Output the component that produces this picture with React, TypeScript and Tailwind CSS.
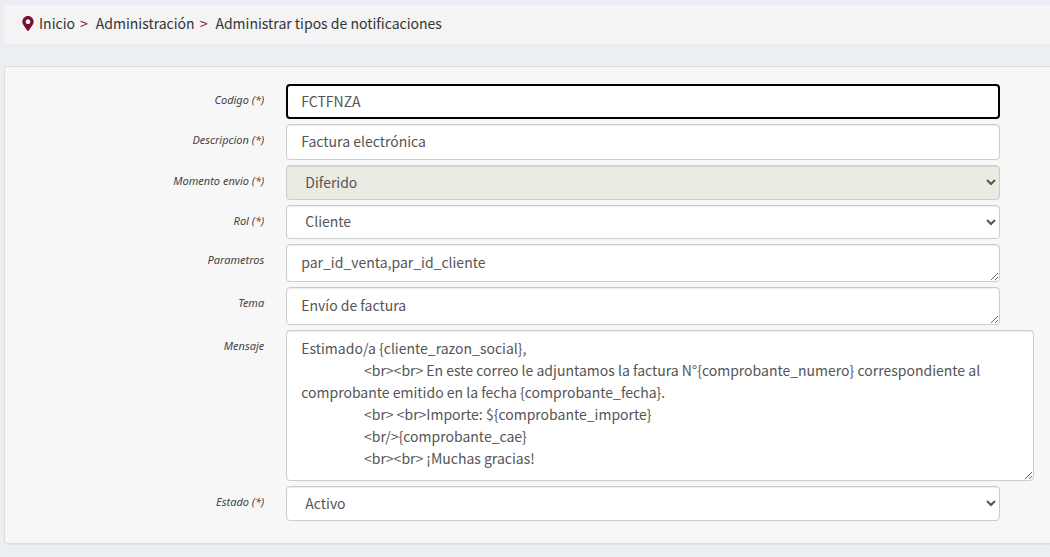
import type { ReactNode } from "react";
import { FaMapMarkerAlt } from "react-icons/fa";
import clsx from "clsx";

const control =
  "block w-full rounded border border-[#ccc] bg-white px-[14px] text-[14px] leading-[22px] text-[#555] shadow-[inset_0_1px_1px_rgba(0,0,0,0.075)] outline-none focus:border-2 focus:border-black focus:px-[13px] focus:shadow-none";

const MENSAJE = [
  "Estimado/a {cliente_razon_social},",
  "                    <br><br> En este correo le adjuntamos la factura N°{comprobante_numero} correspondiente al comprobante emitido en la fecha {comprobante_fecha}.",
  "                    <br> <br>Importe: ${comprobante_importe}",
  "                    <br/>{comprobante_cae}",
  "                    <br><br> ¡Muchas gracias!",
].join("\n");

type FieldProps = {
  id: string;
  label: string;
  wide?: boolean;
  children: ReactNode;
};

const Field = ({ id, label, wide, children }: FieldProps) => (
  <div className="flex items-start">
    <label
      htmlFor={id}
      className="w-1/4 shrink-0 pt-2 pr-[2px] text-right font-['Noto_Sans',sans-serif] text-[11px] leading-4 text-[#444] italic"
    >
      {label}
    </label>
    <div className={clsx("flex-1 pl-5", wide ? "pr-4" : "pr-[50px]")}>{children}</div>
  </div>
);

const Breadcrumb = () => (
  <nav className="rounded-l bg-[#f4f4f4] pt-[7px] pb-[9px] pl-[18px]">
    <ol className="flex items-center text-[14px] leading-[23px] text-[#333]">
      <li className="flex items-center">
        <FaMapMarkerAlt className="mr-[5px] h-[15px] w-3 text-[#7a0c2e]" />
        <a href="#inicio">Inicio</a>
        <span className="mr-2 ml-[5px] text-[#7a0c2e]">&gt;</span>
      </li>
      <li>
        <a href="#administracion">Administración</a>
        <span className="mr-2 ml-[5px] text-[#7a0c2e]">&gt;</span>
      </li>
      <li>Administrar tipos de notificaciones</li>
    </ol>
  </nav>
);

const App = () => {
  return (
    <div className="min-h-screen bg-[#ebeef3] pt-[5px] pb-[13px] pl-1 font-['Noto_Sans_CJK_SC',sans-serif]">
      <Breadcrumb />
      <form className="mt-[22px] flex flex-col gap-[5px] rounded-l border-y border-l border-[#ddd] bg-[#f7f7f7] pt-[17px] pb-[22px] shadow-[0_1px_1px_rgba(0,0,0,0.05)]">
        <Field id="codigo" label="Codigo (*)">
          <input id="codigo" type="text" autoFocus defaultValue="FCTFNZA" className={clsx(control, "h-[35px] pb-[2px]")} />
        </Field>
        <Field id="descripcion" label="Descripcion (*)">
          <input id="descripcion" type="text" defaultValue="Factura electrónica" className={clsx(control, "h-9 pb-[2px]")} />
        </Field>
        <Field id="momento" label="Momento envio (*)">
          <select id="momento" disabled className={clsx(control, "h-[35px] bg-[#ebebe4]! pb-[2px] opacity-100!")}>
            <option>Diferido</option>
          </select>
        </Field>
        <Field id="rol" label="Rol (*)">
          <select id="rol" className={clsx(control, "h-[34px] pb-[2px]")}>
            <option>Cliente</option>
          </select>
        </Field>
        <Field id="parametros" label="Parametros">
          <textarea id="parametros" defaultValue="par_id_venta,par_id_cliente" className={clsx(control, "h-[38px] py-[6px]")} />
        </Field>
        <Field id="tema" label="Tema">
          <textarea id="tema" defaultValue="Envío de factura" className={clsx(control, "h-[38px] py-[6px]")} />
        </Field>
        <Field id="mensaje" label="Mensaje" wide>
          <textarea id="mensaje" defaultValue={MENSAJE} className={clsx(control, "h-[151px] py-[6px]")} />
        </Field>
        <Field id="estado" label="Estado (*)">
          <select id="estado" className={clsx(control, "h-[35px] pb-[2px]")}>
            <option>Activo</option>
          </select>
        </Field>
      </form>
    </div>
  );
};

export default App;
